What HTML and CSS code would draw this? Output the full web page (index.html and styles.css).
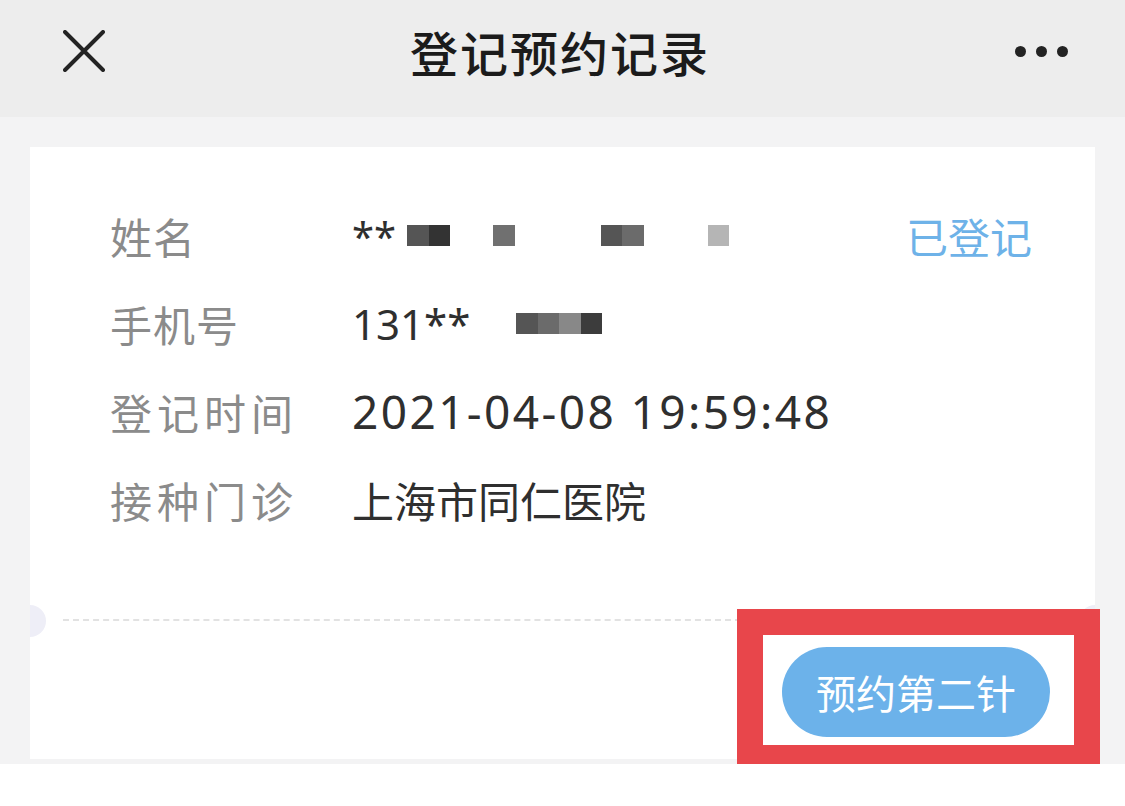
FILE: index.html
```html
<!DOCTYPE html>
<html lang="zh-CN">
<head>
<meta charset="UTF-8">
<meta name="viewport" content="width=device-width,initial-scale=1">
<title>登记预约记录</title>
<link rel="stylesheet" href="styles.css">
</head>
<body>
<header class="topbar">
<svg class="close" width="42" height="42" viewBox="0 0 42 42"><path d="M2 2L40 40M40 2L2 40" stroke="#232323" stroke-width="4" stroke-linecap="round"/></svg>
<div class="title">登记预约记录</div>
<div class="more"><i></i><i></i><i></i></div>
</header>

<main class="page">
<div class="card">
<div class="info">
<div class="row">
<span class="label">姓名</span>
<span class="value"><span class="stars">**</span><span class="mosaic m1"><b class="c55"></b><b class="c33"></b></span><span class="mosaic m2"><b class="c70"></b></span><span class="mosaic m3"><b class="c55"></b><b class="c6b"></b></span><span class="mosaic m4"><b class="cb5"></b></span></span>
<span class="status">已登记</span>
</div>
<div class="row">
<span class="label">手机号</span>
<span class="value">131**<span class="mosaic m5"><b class="c55"></b><b class="c6b"></b><b class="c88"></b><b class="c3c"></b></span></span>
</div>
<div class="row">
<span class="label wide">登记时间</span>
<span class="value num">2021-04-08 19:59:48</span>
</div>
<div class="row">
<span class="label wide">接种门诊</span>
<span class="value">上海市同仁医院</span>
</div>
</div>
<div class="divider"></div>
<div class="actions">
<button class="btn">预约第二针</button>
</div>
<div class="mark"></div>
</div>
</main>
</body>
</html>
```

FILE: styles.css
```css
body{margin:0;background:#fff;font-family:"Noto Sans","Noto Sans CJK SC",sans-serif}
.topbar{height:117px;background:#ededed;display:flex;align-items:center;justify-content:space-between;padding:0 57px 15px 63px;box-sizing:border-box}
.title{font-size:48px;color:#1b1b1b;font-weight:500;letter-spacing:2px}
.more{display:flex;gap:10px}
.more i{width:11px;height:11px;border-radius:50%;background:#232323}
.page{background:#f3f3f4;padding:30px 30px 5px}
.card{background:#fff;position:relative}
.info{padding:44px 63px 76px 80px}
.row{display:flex;align-items:center;height:88px;font-size:42px}
.label{width:242px;color:#8b8b8b;letter-spacing:1px}
.label.wide{letter-spacing:5px}
.value{flex:1;color:#2f2f2f;display:flex;align-items:center}
.num{font-size:46px;letter-spacing:2.4px}
.status{color:#6eb2e8}
.stars{font-size:40px;margin-right:11px}
.mosaic{display:flex;height:21px}
.mosaic b{width:21.5px;height:21px}
.m1{margin-right:43px}
.m2{margin-right:86px}
.m3{margin-right:64px}
.m5{margin-left:46px}
.c55{background:#555}
.c33{background:#333}
.c70{background:#707070}
.c6b{background:#6b6b6b}
.cb5{background:#b5b5b5}
.c88{background:#888}
.c3c{background:#3c3c3c}
.divider{position:relative;margin:0 33px;border-top:2px dashed #e2e2e2}
.divider::before,.divider::after{content:"";position:absolute;top:-16px;width:16px;height:32px;background:#eeeef7}
.divider::before{left:-33px;border-radius:0 16px 16px 0}
.divider::after{right:-33px;border-radius:16px 0 0 16px}
.actions{display:flex;justify-content:flex-end;padding:26px 45px 22px}
.btn{width:268px;height:90px;border:none;border-radius:45px;background:#6cb2ea;color:#fff;font-size:40px;font-family:inherit;padding:0}
.mark{position:absolute;left:707px;top:462px;width:363px;height:162px;border:26px solid #e8464b;box-sizing:border-box}
```
